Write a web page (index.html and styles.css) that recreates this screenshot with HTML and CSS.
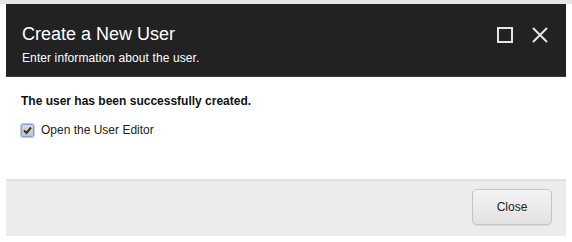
FILE: index.html
```html
<!DOCTYPE html>
<html>
<head>
<meta charset="utf-8">
<link rel="stylesheet" href="styles.css">
</head>
<body>
<div class="topstrip"></div>
<div class="dialog">
  <div class="header">
    <div class="titles">
      <div class="title">Create a New User</div>
      <div class="subtitle">Enter information about the user.</div>
    </div>
    <div class="controls">
      <svg class="icon" width="16" height="16" viewBox="0 0 16 16"><rect x="1" y="1" width="14" height="14" fill="none" stroke="#e6e6e6" stroke-width="2"/></svg>
      <svg class="icon" width="18" height="18" viewBox="0 0 18 18"><path d="M2 2 L16 16 M16 2 L2 16" stroke="#e6e6e6" stroke-width="2" fill="none"/></svg>
    </div>
  </div>
  <div class="content">
    <div class="message">The user has been successfully created.</div>
    <label class="check">
      <input type="checkbox" checked>
      <span class="box"><svg width="11" height="11" viewBox="0 0 11 11"><path d="M2 5.5 L4.5 8 L9 2.5" stroke="#333" stroke-width="2" fill="none"/></svg></span>
      <span>Open the User Editor</span>
    </label>
  </div>
  <div class="footer">
    <button class="btn">Close</button>
  </div>
</div>
</body>
</html>
```
FILE: styles.css
```css
html, body { margin: 0; padding: 0; background: #fff; }
body { font-family: "Liberation Sans", Arial, sans-serif; width: 572px; height: 242px; overflow: hidden; }
.topstrip { height: 4px; background: #e6e6e6; }
.dialog { margin: 0 6px; width: 560px; }
.header {
  background: #222222;
  height: 73px;
  border-bottom: 1px solid #3a3a3a;
  display: flex;
  justify-content: space-between;
  align-items: flex-start;
  box-sizing: border-box;
  padding: 19px 16px 0 16px;
}
.title { color: #fff; font-size: 18px; line-height: 22px; }
.subtitle { color: #fff; font-size: 12px; line-height: 14px; margin-top: 6px; letter-spacing: 0.1px; }
.controls { display: flex; align-items: center; gap: 18px; padding-top: 3px; padding-right: 1px; }
.icon { display: block; }
.content { padding: 17px 15px 0 15px; height: 102px; box-sizing: border-box; }
.message { font-size: 12px; font-weight: bold; color: #111; line-height: 14px; }
.check { display: flex; align-items: center; margin-top: 15px; font-size: 12px; color: #222; }
.check input { position: absolute; opacity: 0; width: 0; height: 0; margin: 0; }
.box {
  width: 11px; height: 11px;
  border: 1px solid #7fa3d6;
  border-radius: 2px;
  background: linear-gradient(#d8d8d8, #c4c4c4);
  margin-right: 7px;
  display: flex; align-items: center; justify-content: center;
  box-shadow: 0 0 0 1px #b9cdea;
}
.box svg { display: block; }
.footer {
  background: #ececec;
  border-top: 2px solid #e2e2e2;
  height: 57px;
  box-sizing: border-box;
  display: flex;
  justify-content: flex-end;
  align-items: flex-start;
  padding: 8px 14px 0 0;
}
.btn {
  width: 80px; height: 36px;
  border: 1px solid #c4c4c4;
  border-radius: 5px;
  background: linear-gradient(#f4f4f4, #e2e2e2);
  font-family: "Liberation Sans", Arial, sans-serif;
  font-size: 12px; color: #222;
  box-shadow: 0 1px 1px rgba(0,0,0,0.08);
}
```
